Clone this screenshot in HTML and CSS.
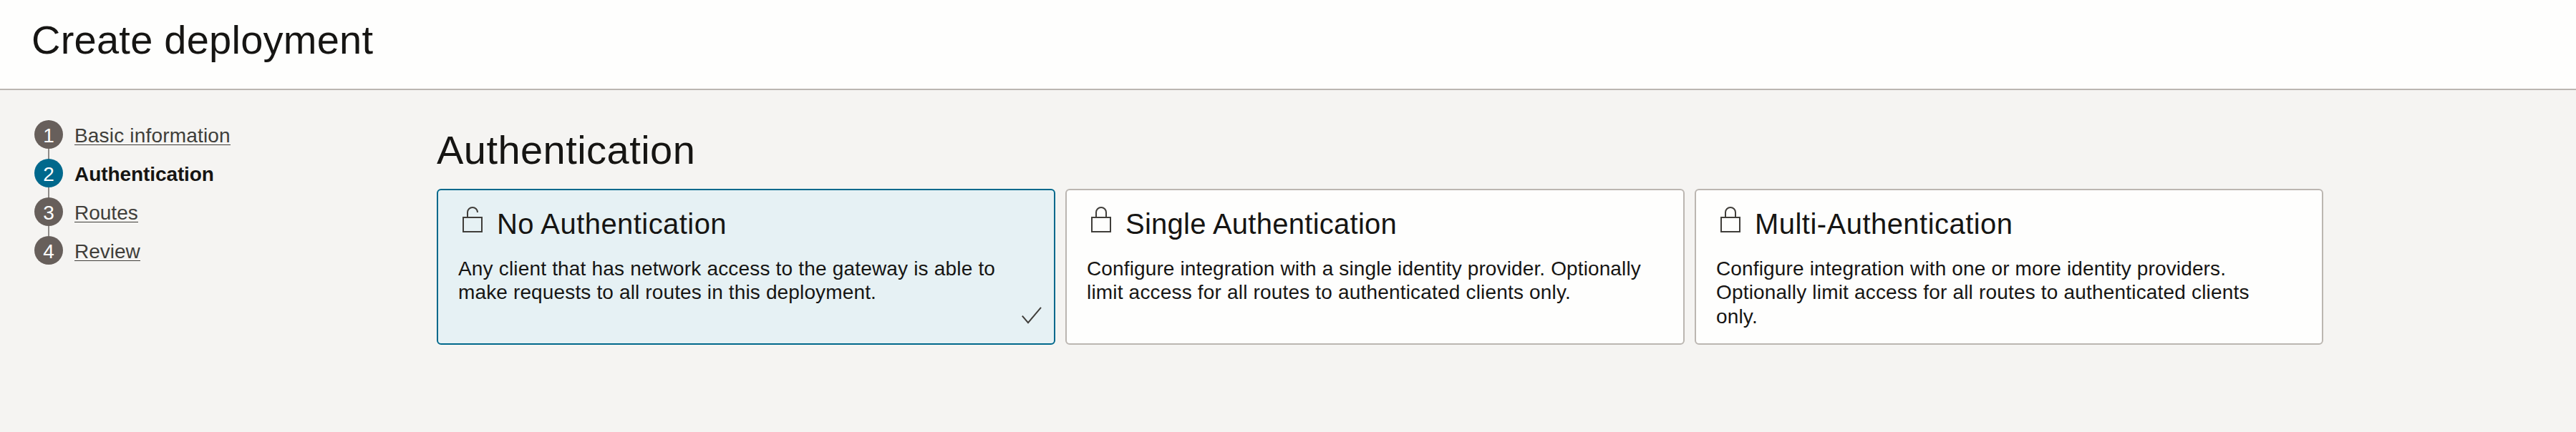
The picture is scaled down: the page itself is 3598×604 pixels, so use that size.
FILE: index.html
```html
<!DOCTYPE html>
<html lang="en">
<head>
<meta charset="utf-8">
<title>Create deployment</title>
<link rel="stylesheet" href="styles.css">
</head>
<body>
<header class="header"><h1 class="page-title">Create deployment</h1></header>
<div class="layout">
  <nav>
    <ol class="steps">
      <li class="step"><span class="num">1</span><a class="label spaced">Basic information</a></li>
      <li class="step current"><span class="num">2</span><span class="label">Authentication</span></li>
      <li class="step"><span class="num">3</span><a class="label">Routes</a></li>
      <li class="step"><span class="num">4</span><a class="label">Review</a></li>
    </ol>
  </nav>
  <main class="content">
    <h2 class="section-title">Authentication</h2>
    <div class="cards">
      <section class="card selected">
        <div class="card-head">
          <svg class="lock" viewBox="0 0 28 36"><path d="M1 15H27V35H1ZM7 15V8A7 7 0 0 1 21 8"/></svg>
          <h3 class="card-title t-none">No Authentication</h3>
        </div>
        <p class="desc"><span class="line n1">Any client that has network access to the gateway is able to</span> <span class="line n2">make requests to all routes in this deployment.</span></p>
        <svg class="check" viewBox="0 0 30 26"><path d="M1.8 13.6L10 23.2L28 1.8"/></svg>
      </section>
      <section class="card">
        <div class="card-head">
          <svg class="lock" viewBox="0 0 28 36"><path d="M1 15H27V35H1ZM7 15V8A7 7 0 0 1 21 8V15"/></svg>
          <h3 class="card-title t-single">Single Authentication</h3>
        </div>
        <p class="desc"><span class="line s1">Configure integration with a single identity provider. Optionally</span> <span class="line s2">limit access for all routes to authenticated clients only.</span></p>
      </section>
      <section class="card">
        <div class="card-head">
          <svg class="lock" viewBox="0 0 28 36"><path d="M1 15H27V35H1ZM7 15V8A7 7 0 0 1 21 8V15"/></svg>
          <h3 class="card-title t-multi">Multi-Authentication</h3>
        </div>
        <p class="desc"><span class="line m1">Configure integration with one or more identity providers.</span> <span class="line m2">Optionally limit access for all routes to authenticated clients</span> <span class="line m1">only.</span></p>
      </section>
    </div>
  </main>
</div>
</body>
</html>
```
FILE: styles.css
```css
* { box-sizing: border-box; }
html { height: 100%; background: #f5f4f2; }
body {
  margin: 0;
  color: #161513;
  font: 28px/35px "Liberation Sans", Arial, sans-serif;
}
h1, h2, h3, p, ol { margin: 0; padding: 0; font-weight: 400; }
svg { display: block; fill: none; stroke: #403e3a; stroke-width: 2; }
.header {
  height: 126px;
  padding: 23px 0 0 44px;
  background: #fefefd;
  border-bottom: 2px solid #bbb6b1;
}
.page-title { font-size: 56px; line-height: 65px; letter-spacing: .24px; }
.layout { display: grid; grid-template-columns: 562px 1fr; padding: 42px 0 0 48px; }
.steps { list-style: none; display: flex; flex-direction: column; }
.step { display: grid; grid-template-columns: 40px auto; column-gap: 16px; height: 54px; justify-content: start; }
.step:not(:last-child) {
  background: linear-gradient(#8f8b88, #8f8b88) 19px 0 / 2px 100% no-repeat;
}
.num {
  width: 40px;
  height: 40px;
  border-radius: 50%;
  background: #675f5b;
  color: #fff;
  line-height: 43px;
  text-align: center;
}
.current .num { background: #00688c; }
.label { height: 35px; margin-top: 4px; justify-self: start; }
a.label { height: 31px; border-bottom: 1px solid #403e3a; color: #403e3a; }
.spaced { letter-spacing: .18px; }
.current .label { font-weight: 700; letter-spacing: -.08px; }
.content { padding-top: 9px; }
.section-title { font-size: 56px; line-height: 65px; letter-spacing: .45px; }
.cards { display: grid; grid-template-columns: 864px 865px 878px; column-gap: 14px; margin-top: 22px; }
.card {
  position: relative;
  height: 218px;
  padding: 23px 28px 0;
  background: #fefefd;
  border: 2px solid #bbb6b1;
  border-radius: 6px;
}
.card.selected { background: #e6f1f4; border-color: #00688c; }
.card-head { display: flex; gap: 20px; padding-left: 6px; height: 70px; }
.lock { width: 28px; height: 36px; }
.card-title { font-size: 40px; line-height: 46px; padding-top: 1px; white-space: nowrap; }
.t-none { letter-spacing: .44px; }
.t-single { letter-spacing: .26px; }
.t-multi { letter-spacing: .46px; }
.desc { line-height: 33.4px; }
.line { display: block; white-space: nowrap; }
.n1 { letter-spacing: .18px; }
.n2 { letter-spacing: .14px; }
.s1 { letter-spacing: .125px; }
.s2 { letter-spacing: .18px; }
.m1 { letter-spacing: .15px; }
.m2 { letter-spacing: .185px; }
.check { position: absolute; right: 16px; bottom: 26px; width: 30px; height: 26px; }
```
